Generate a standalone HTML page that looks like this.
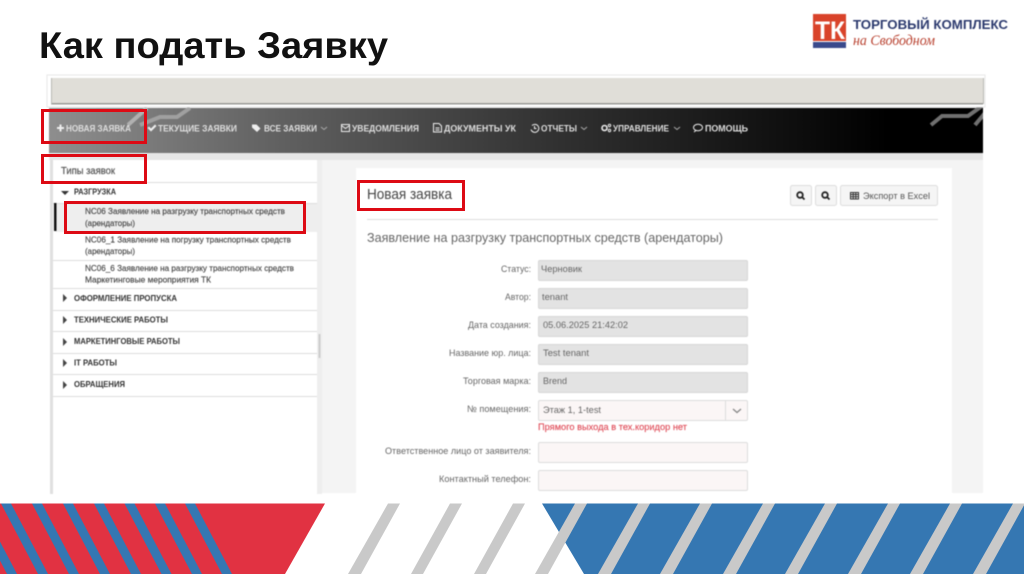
<!DOCTYPE html>
<html lang="ru">
<head>
<meta charset="utf-8">
<title>Как подать Заявку</title>
<style>
html,body{margin:0;padding:0;background:#fff;width:1024px;height:574px;overflow:hidden}
svg{display:block}
text{font-family:"Liberation Sans","DejaVu Sans",sans-serif}
.nav{font-size:9.5px;fill:#dedede;font-weight:bold}
.side{font-size:8.5px;fill:#444;font-weight:normal;stroke:#444;stroke-width:.15px}
.cat{font-size:8.5px;fill:#333;font-weight:bold}
.lab{font-size:9.5px;fill:#666}
.val{font-size:9px;fill:#666}
.soft{filter:blur(.45px)}
</style>
</head>
<body>
<svg width="1024" height="574" viewBox="0 0 1024 574" xmlns="http://www.w3.org/2000/svg">
<defs>
<linearGradient id="ng" x1="0" x2="1" y1="0" y2="0">
<stop offset="0" stop-color="#8e8e8e"/>
<stop offset=".25" stop-color="#606060"/>
<stop offset=".55" stop-color="#303030"/>
<stop offset=".9" stop-color="#000"/>
<stop offset="1" stop-color="#000"/>
</linearGradient>
<clipPath id="navclip"><rect x="49" y="104" width="934" height="49"/></clipPath>
<clipPath id="redclip"><polygon points="0,503.5 325,503.5 285,574 0,574"/></clipPath>
</defs>

<text x="39" y="58" font-size="37" font-weight="bold" fill="#111" textLength="349" lengthAdjust="spacingAndGlyphs">Как подать Заявку</text>

<!-- logo -->
<g class="soft">
<rect x="813" y="14" width="33" height="27" fill="#d9432a"/>
<rect x="813" y="42" width="33" height="6" fill="#3a4a8c"/>
<text x="815" y="39" font-size="25" font-weight="bold" fill="#fff" textLength="30" lengthAdjust="spacingAndGlyphs">ТК</text>
<text x="853" y="29" font-size="13" font-weight="bold" fill="#2c3a6e" textLength="155" lengthAdjust="spacingAndGlyphs">ТОРГОВЫЙ КОМПЛЕКС</text>
<text x="853" y="45" font-size="15" font-style="italic" fill="#b8412f" textLength="82" lengthAdjust="spacingAndGlyphs" style="font-family:'Liberation Serif',serif">на Свободном</text>
</g>

<g class="soft">
<!-- app backgrounds -->
<rect x="49" y="153" width="934" height="7" fill="#e6e6e6"/>
<rect x="322" y="160" width="661" height="333" fill="#f4f4f4"/>
<rect x="50" y="160" width="3" height="334" fill="#e0e0e0"/>
<rect x="53" y="160" width="264" height="334" fill="#fff"/>
<rect x="317" y="160" width="5" height="334" fill="#eeeeee"/>
<rect x="318.5" y="334" width="2" height="24" fill="#cccccc"/>
<rect x="356" y="168" width="596" height="325" fill="#fff"/>

<!-- nav -->
<rect x="49" y="108" width="934" height="45" fill="url(#ng)"/>
<g clip-path="url(#navclip)" fill="none" stroke-width="4">
<path d="M128 125 L147 108" stroke="#b0b0b0"/>
<path d="M140 125 L160 117 H177 L190 108" stroke="#a0a0a0"/>
<path d="M931 125 L942 116 H968 L982 106" stroke="#707070"/>
<path d="M975 125 L985 113" stroke="#707070"/>
</g>
<!-- nav icons -->
<g fill="#eee" stroke="none">
<rect x="57" y="127" width="7" height="2"/><rect x="59.5" y="124.5" width="2" height="7"/>
<path d="M147.500 128 l1.500 -1.500 l2 2 l4 -4 l1.500 1.500 l-5.500 5.500z"/>
<path d="M252 124.500 h4.500 l4 4 l-3.500 3.500 l-5 -4.500z"/>
</g>
<g fill="none" stroke="#eee" stroke-width="1">
<rect x="341.500" y="124.500" width="8" height="7"/><path d="M341.500 125.500 l4 3 l4 -3"/>
<path d="M433.500 123.500 h5.500 l2.500 2.500 v6 h-8z"/><path d="M435.500 128 h4 M435.500 130 h4"/>
<path d="M532 125.500 a4 4 0 1 1 -1 4"/><path d="M534.500 126 v2.500 h2"/>
<circle cx="604.500" cy="128" r="2.500" stroke-width="1.600"/><circle cx="609.500" cy="125.500" r="1.200"/><circle cx="609.500" cy="130.500" r="1.200"/>
<ellipse cx="698" cy="127.500" rx="4.500" ry="3.300"/><path d="M696 130.500 l-2 1.500"/>
</g>
<g fill="none" stroke="#aaa" stroke-width="1">
<path d="M321 127 l3 2.500 l3 -2.500"/><path d="M581 127 l3 2.500 l3 -2.500"/><path d="M674 127 l3 2.500 l3 -2.500"/>
</g>
<text class="nav" x="66" y="131.500" textLength="65" lengthAdjust="spacingAndGlyphs">НОВАЯ ЗАЯВКА</text>
<text class="nav" x="158" y="131.500" textLength="79" lengthAdjust="spacingAndGlyphs">ТЕКУЩИЕ ЗАЯВКИ</text>
<text class="nav" x="264" y="131.500" textLength="53" lengthAdjust="spacingAndGlyphs">ВСЕ ЗАЯВКИ</text>
<text class="nav" x="352" y="131.500" textLength="67" lengthAdjust="spacingAndGlyphs">УВЕДОМЛЕНИЯ</text>
<text class="nav" x="444" y="131.500" textLength="72" lengthAdjust="spacingAndGlyphs">ДОКУМЕНТЫ УК</text>
<text class="nav" x="541" y="131.500" textLength="36" lengthAdjust="spacingAndGlyphs">ОТЧЕТЫ</text>
<text class="nav" x="613" y="131.500" textLength="56" lengthAdjust="spacingAndGlyphs">УПРАВЛЕНИЕ</text>
<text class="nav" x="705" y="131.500" textLength="43" lengthAdjust="spacingAndGlyphs">ПОМОЩЬ</text>

<!-- sidebar -->
<text x="61" y="174" font-size="10" fill="#555" stroke="#555" stroke-width=".2" textLength="54" lengthAdjust="spacingAndGlyphs">Типы заявок</text>
<g fill="#ddd">
<rect x="53" y="182" width="264" height="1"/>
<rect x="53" y="203" width="264" height="1"/>
<rect x="53" y="260" width="264" height="1"/>
<rect x="53" y="288" width="264" height="1"/>
<rect x="53" y="310" width="264" height="1"/>
<rect x="53" y="331" width="264" height="1"/>
<rect x="53" y="353" width="264" height="1"/>
<rect x="53" y="374" width="264" height="1"/>
<rect x="53" y="396" width="264" height="1"/>
</g>
<rect x="56" y="204" width="261" height="28" fill="#eeeeee"/>
<rect x="54" y="203" width="2.500" height="28" fill="#111"/>
<path d="M61 191 h8 l-4 4z" fill="#333"/>
<g fill="#444">
<path d="M63 294 l4 4 l-4 4z"/><path d="M63 316 l4 4 l-4 4z"/><path d="M63 338 l4 4 l-4 4z"/><path d="M63 359 l4 4 l-4 4z"/><path d="M63 381 l4 4 l-4 4z"/>
</g>
<text class="cat" x="74" y="194.500" textLength="42" lengthAdjust="spacingAndGlyphs">РАЗГРУЗКА</text>
<text class="cat" x="74" y="301" textLength="103" lengthAdjust="spacingAndGlyphs">ОФОРМЛЕНИЕ ПРОПУСКА</text>
<text class="cat" x="74" y="322.500" textLength="94" lengthAdjust="spacingAndGlyphs">ТЕХНИЧЕСКИЕ РАБОТЫ</text>
<text class="cat" x="74" y="344" textLength="106" lengthAdjust="spacingAndGlyphs">МАРКЕТИНГОВЫЕ РАБОТЫ</text>
<text class="cat" x="74" y="365.500" textLength="43" lengthAdjust="spacingAndGlyphs">IT РАБОТЫ</text>
<text class="cat" x="74" y="387" textLength="51" lengthAdjust="spacingAndGlyphs">ОБРАЩЕНИЯ</text>
<text class="side" x="85" y="214" textLength="200" lengthAdjust="spacingAndGlyphs">NC06 Заявление на разгрузку транспортных средств</text>
<text class="side" x="85" y="226" textLength="50" lengthAdjust="spacingAndGlyphs">(арендаторы)</text>
<text class="side" x="85" y="242.500" textLength="206" lengthAdjust="spacingAndGlyphs">NC06_1 Заявление на погрузку транспортных средств</text>
<text class="side" x="85" y="254" textLength="50" lengthAdjust="spacingAndGlyphs">(арендаторы)</text>
<text class="side" x="85" y="271" textLength="209" lengthAdjust="spacingAndGlyphs">NC06_6 Заявление на разгрузку транспортных средств</text>
<text class="side" x="85" y="282.500" textLength="126" lengthAdjust="spacingAndGlyphs">Маркетинговые мероприятия ТК</text>

<!-- main card -->
<text x="367" y="199" font-size="15" fill="#444" textLength="85" lengthAdjust="spacingAndGlyphs">Новая заявка</text>
<rect x="367" y="219" width="571" height="1" fill="#ddd"/>
<text x="367" y="242" font-size="13" fill="#666" textLength="356" lengthAdjust="spacingAndGlyphs">Заявление на разгрузку транспортных средств (арендаторы)</text>

<g fill="#f5f5f5" stroke="#ddd">
<rect x="790.500" y="185.500" width="21" height="20" rx="2"/>
<rect x="815.500" y="185.500" width="21" height="20" rx="2"/>
<rect x="840.500" y="185.500" width="97" height="20" rx="2"/>
</g>
<g fill="none" stroke="#222" stroke-width="1.800">
<circle cx="800" cy="195" r="2.800"/><path d="M802 197 l2.500 2.500"/>
<circle cx="825" cy="195" r="2.800"/><path d="M827 197 l2.500 2.500"/>
</g>
<g fill="none" stroke="#333" stroke-width="1">
<rect x="850.500" y="192.500" width="8" height="6.500"/><path d="M850.500 194.500 h8 M850.500 196.700 h8 M853.200 192.500 v6.500 M855.800 192.500 v6.500"/>
</g>
<text x="863" y="199" font-size="9.500" fill="#555" textLength="67" lengthAdjust="spacingAndGlyphs">Экспорт в Excel</text>

<!-- form -->
<g fill="#e3e3e3" stroke="#d6d6d6">
<rect x="538.500" y="260.500" width="209" height="20" rx="1.500"/>
<rect x="538.500" y="288.500" width="209" height="20" rx="1.500"/>
<rect x="538.500" y="316.500" width="209" height="20" rx="1.500"/>
<rect x="538.500" y="344.500" width="209" height="20" rx="1.500"/>
<rect x="538.500" y="372.500" width="209" height="20" rx="1.500"/>
</g>
<rect x="538.500" y="400.500" width="209" height="20" rx="1.500" fill="#fbf6f6" stroke="#ddd"/>
<rect x="725" y="401" width="1" height="19" fill="#ddd"/>
<path d="M733 409 l4 3.500 l4 -3.500" fill="none" stroke="#888" stroke-width="1.300"/>
<rect x="538.500" y="442.500" width="209" height="20" rx="1.500" fill="#fbf6f6" stroke="#ddd"/>
<rect x="538.500" y="470.500" width="209" height="20" rx="1.500" fill="#fbf6f6" stroke="#ddd"/>

<text class="lab" x="501" y="272" textLength="30" lengthAdjust="spacingAndGlyphs">Статус:</text>
<text class="lab" x="505" y="300" textLength="26" lengthAdjust="spacingAndGlyphs">Автор:</text>
<text class="lab" x="468" y="328" textLength="63" lengthAdjust="spacingAndGlyphs">Дата создания:</text>
<text class="lab" x="449" y="356" textLength="82" lengthAdjust="spacingAndGlyphs">Название юр. лица:</text>
<text class="lab" x="463" y="384" textLength="68" lengthAdjust="spacingAndGlyphs">Торговая марка:</text>
<text class="lab" x="467" y="412" textLength="64" lengthAdjust="spacingAndGlyphs">№ помещения:</text>
<text class="lab" x="385" y="454" textLength="146" lengthAdjust="spacingAndGlyphs">Ответственное лицо от заявителя:</text>
<text class="lab" x="439" y="482" textLength="92" lengthAdjust="spacingAndGlyphs">Контактный телефон:</text>

<text class="val" x="541" y="272" textLength="41" lengthAdjust="spacingAndGlyphs">Черновик</text>
<text class="val" x="542" y="300" textLength="26" lengthAdjust="spacingAndGlyphs">tenant</text>
<text class="val" x="543" y="328" textLength="85" lengthAdjust="spacingAndGlyphs">05.06.2025 21:42:02</text>
<text class="val" x="543" y="356" textLength="46" lengthAdjust="spacingAndGlyphs">Test tenant</text>
<text class="val" x="543" y="384" textLength="24" lengthAdjust="spacingAndGlyphs">Brend</text>
<text class="val" x="543" y="413" textLength="58" lengthAdjust="spacingAndGlyphs">Этаж 1, 1-test</text>
<text x="538" y="430" font-size="9" fill="#e0505c" stroke="#e0505c" stroke-width=".15" textLength="149" lengthAdjust="spacingAndGlyphs">Прямого выхода в тех.коридор нет</text>

<!-- top bar card -->
<rect x="47" y="75" width="938" height="32" fill="#fff" stroke="#e8e8e8"/>
<rect x="51" y="78" width="932" height="26" fill="#e0ded8"/>
<rect x="51" y="103" width="932" height="1.500" fill="#9a9a96"/>
<rect x="51" y="78" width="1" height="26" fill="#b8b8b4"/>
<rect x="983" y="78" width="1" height="26" fill="#b8b8b4"/>
</g>

<!-- red highlights -->
<g fill="none" stroke="#dd0a14" stroke-width="3">
<rect x="42.500" y="110.500" width="103" height="32"/>
<rect x="42.500" y="155.500" width="103" height="27"/>
<rect x="65.500" y="202.500" width="239" height="30"/>
<rect x="358.500" y="181.500" width="105" height="28"/>
</g>

<!-- bottom band -->
<polygon points="0,503.500 325,503.500 285,574 0,574" fill="#e13242"/>
<g clip-path="url(#redclip)" fill="#3577b2">
<polygon points="1,503.500 11,503.500 48,574 38,574"/>
<polygon points="32,503.500 42,503.500 79,574 69,574"/>
<polygon points="63,503.500 73,503.500 110,574 100,574"/>
<polygon points="94,503.500 104,503.500 141,574 131,574"/>
<polygon points="124.500,503.500 134.500,503.500 171.500,574 161.500,574"/>
<polygon points="155,503.500 165,503.500 202,574 192,574"/>
<polygon points="185,503.500 195,503.500 232,574 222,574"/>
<polygon points="-30,503.500 -20,503.500 17,574 7,574"/>
</g>
<polygon points="542,503.500 1024,503.500 1024,574 584,574" fill="#3577b2"/>
<g fill="#c9c9c9">
<polygon points="388,503.500 400,503.500 361,574 348,574"/>
<polygon points="450,503.500 462,503.500 423,574 411,574"/>
<polygon points="513,503.500 525,503.500 486,574 474,574"/>
<polygon points="575,503.500 587,503.500 548,574 535,574"/>
<polygon points="638,503.500 650,503.500 611,574 598,574"/>
<polygon points="700,503.500 712,503.500 673,574 660,574"/>
<polygon points="763,503.500 775,503.500 736,574 723,574"/>
<polygon points="825,503.500 837,503.500 798,574 785,574"/>
<polygon points="888,503.500 900,503.500 861,574 848,574"/>
<polygon points="950,503.500 962,503.500 923,574 910,574"/>
<polygon points="1013,503.500 1025,503.500 986,574 973,574"/>
</g>
</svg>
</body>
</html>
